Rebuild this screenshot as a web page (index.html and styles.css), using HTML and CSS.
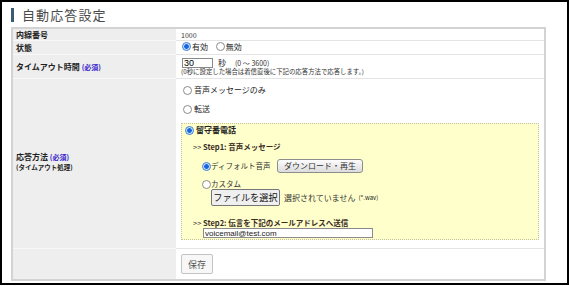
FILE: index.html
```html
<!DOCTYPE HTML>
<html>
	<head>
		<title>自動応答設定</title>
		<meta charset="utf-8">
		<link rel="stylesheet" href="styles.css">
	</head>
	<body>
	<div class="frame">
		<h1 class="title">自動応答設定</h1>
		<table class="form">
			<tr class="r1">
				<th>内線番号</th>
				<td class="num">1000</td>
			</tr>
			<tr class="r2">
				<th>状態</th>
				<td>
					<label class="opt"><input type="radio" name="state" checked>有効</label>
					<label class="opt"><input type="radio" name="state">無効</label>
				</td>
			</tr>
			<tr class="r3">
				<th>タイムアウト時間 <span class="req">(必須)</span></th>
				<td>
					<div class="timeout"><input type="text" class="sec" value="30"><span>秒</span><span class="range">(0 〜 3600)</span></div>
					<div class="note">(0秒に設定した場合は着信直後に下記の応答方法で応答します。)</div>
				</td>
			</tr>
			<tr class="r4">
				<th>
					<div class="mainlabel">応答方法 <span class="req">(必須)</span></div>
					<div class="sublabel">(タイムアウト処理)</div>
				</th>
				<td>
					<label class="mode"><input type="radio" name="mode">音声メッセージのみ</label>
					<label class="mode"><input type="radio" name="mode">転送</label>
					<div class="box">
						<label class="mode first"><input type="radio" name="mode" checked>留守番電話</label>
						<div class="step">&gt;&gt; <b>Step1: 音声メッセージ</b></div>
						<div class="voice">
							<label class="sub"><input type="radio" name="voice" checked>ディフォルト音声</label>
							<button class="dl">ダウンロード・再生</button>
						</div>
						<label class="sub custom"><input type="radio" name="voice">カスタム</label>
						<div class="upload">
							<button class="file">ファイルを選択</button>
							<span class="none">選択されていません</span>
							<span class="ext">(*.wav)</span>
						</div>
						<div class="step two">&gt;&gt; <b>Step2: 伝言を下記のメールアドレスへ送信</b></div>
						<input type="text" class="mail" value="voicemail@test.com">
					</div>
				</td>
			</tr>
			<tr class="r5">
				<th></th>
				<td><button class="save">保存</button></td>
			</tr>
		</table>
	</div>
	</body>
</html>
```

FILE: styles.css
```css
html{
	height: 100%;
}

body{
	margin: 0;
	font-family: "Noto Sans CJK JP", "Liberation Sans", sans-serif;
	color: #222;
	background: #fff;
}

.frame{
	width: 569px;
	height: 285px;
	box-sizing: border-box;
	border: 2px solid #000;
	padding: 5px 0 0 9px;
}

.title{
	display: flex;
	align-items: center;
	margin: 0;
	height: 15px;
	font-size: 13px;
	font-weight: normal;
	letter-spacing: 1.1px;
	color: #4a4a4a;
	line-height: 15px;
}

.title::before{
	content: "";
	display: block;
	width: 3px;
	height: 14px;
	margin-right: 8px;
	background: #3a5c6e;
}

.form{
	margin-top: 5px;
	width: 535px;
	border-collapse: collapse;
	table-layout: fixed;
	border: 2px solid #d3d3d3;
	font-size: 8px;
}

.form th{
	width: 157px;
	background: #eeeeee;
	text-align: left;
	padding: 0 3px;
	font-weight: bold;
	line-height: 9px;
	vertical-align: middle;
	border-top: 1px solid #f8f8f8;
	white-space: nowrap;
}

.form td{
	padding: 0 0 0 5px;
	border-top: 1px solid #e4e4e4;
	vertical-align: middle;
	line-height: 10px;
}

.req{
	color: #3322cc;
	font-size: 7px;
}

.mainlabel{
	line-height: 9px;
}

.sublabel{
	font-size: 6.5px;
	line-height: 8px;
	margin-top: 1px;
}

.r1 td, .r1 th{
	height: 11px;
}

.r1 td.num{
	font-size: 7px;
	color: #333;
}

.r2 td, .r2 th{
	height: 13px;
}

.r3 td, .r3 th{
	height: 23px;
}

.r4 th{
	height: 164px;
	padding-bottom: 5px;
}

.r4 td{
	height: 164px;
	vertical-align: top;
	padding-top: 6px;
	box-sizing: border-box;
}

.r5 td, .r5 th{
	height: 30px;
}

input[type="radio"]{
	appearance: none;
	-webkit-appearance: none;
	width: 9px;
	height: 9px;
	margin: 0 1px 0 1px;
	border: 1px solid #8c8c8c;
	border-radius: 50%;
	background: #fff;
	box-sizing: border-box;
	flex: none;
}

input[type="radio"]:checked{
	border-color: #3d7fd8;
	background: radial-gradient(circle, #1565e0 0, #1565e0 2px, #bcd8f6 2.6px, #e4f0fc 4px);
}

.opt{
	display: inline-flex;
	align-items: center;
	margin-right: 5px;
}

.timeout{
	display: flex;
	align-items: center;
	margin-top: 1px;
}

.sec{
	width: 31px;
	height: 10px;
	box-sizing: border-box;
	border: 1px solid #8a8a8a;
	padding: 0 1px;
	font-family: "Liberation Sans", sans-serif;
	font-size: 9px;
	margin: 0 5px 0 1px;
}

.range{
	margin-left: 9px;
	font-size: 7px;
	color: #333;
}

.note{
	font-size: 6.4px;
	line-height: 8px;
	color: #333;
}

.mode{
	display: flex;
	align-items: center;
	height: 10px;
	margin: 0 0 9px 1px;
}

.mode input{
	margin-right: 2px;
}

.box{
	margin: 0 5px 0 0;
	height: 117px;
	box-sizing: border-box;
	background: #ffffcc;
	border: 1px dotted #c2c2a0;
	padding: 1px 0 0 2px;
}

.box .mode.first{
	margin: 0;
	font-weight: bold;
}

.step{
	margin-top: 7px;
	padding-left: 9px;
	height: 10px;
	font-size: 7.5px;
	color: #333;
}

.step b{
	color: #3a2b1e;
}

.voice{
	display: flex;
	align-items: center;
	margin: 7px 0 0 17px;
	height: 14px;
}

.voice .sub{
	width: 76px;
}

.sub{
	display: flex;
	align-items: center;
	font-size: 7.5px;
	color: #333;
	white-space: nowrap;
}

.sub input{
	margin-right: 0;
}

.dl{
	width: 86px;
	height: 14px;
	padding: 0;
	border: 1px solid #8d8d8d;
	border-radius: 3px;
	background: linear-gradient(#fdfdfd, #dcdcdc);
	font-family: inherit;
	font-size: 8px;
	color: #333;
	line-height: 12px;
	white-space: nowrap;
}

.custom{
	margin: 6px 0 0 17px;
	height: 10px;
}

.upload{
	display: flex;
	align-items: center;
	margin: 0 0 0 27px;
	height: 17px;
	font-size: 8px;
}

.file{
	width: 69px;
	height: 17px;
	padding: 0;
	border: 1px solid #767676;
	border-radius: 2px;
	background: #efefef;
	font-family: inherit;
	font-size: 9.2px;
	color: #111;
	line-height: 15px;
	white-space: nowrap;
}

.none{
	margin-left: 4px;
	color: #333;
}

.ext{
	margin-left: 3px;
	font-size: 6px;
}

.step.two{
	margin-top: 12px;
}

.mail{
	display: block;
	margin: 0 0 0 19px;
	width: 170px;
	height: 10px;
	box-sizing: border-box;
	border: 1px solid #8a8a8a;
	padding: 0 1px;
	font-family: "Liberation Sans", sans-serif;
	font-size: 8px;
	color: #222;
}

.save{
	width: 32px;
	height: 20px;
	padding: 0;
	border: 1px solid #c4c4c4;
	border-radius: 2px;
	background: #f7f7f7;
	font-family: inherit;
	font-size: 9px;
	color: #555;
}
```
